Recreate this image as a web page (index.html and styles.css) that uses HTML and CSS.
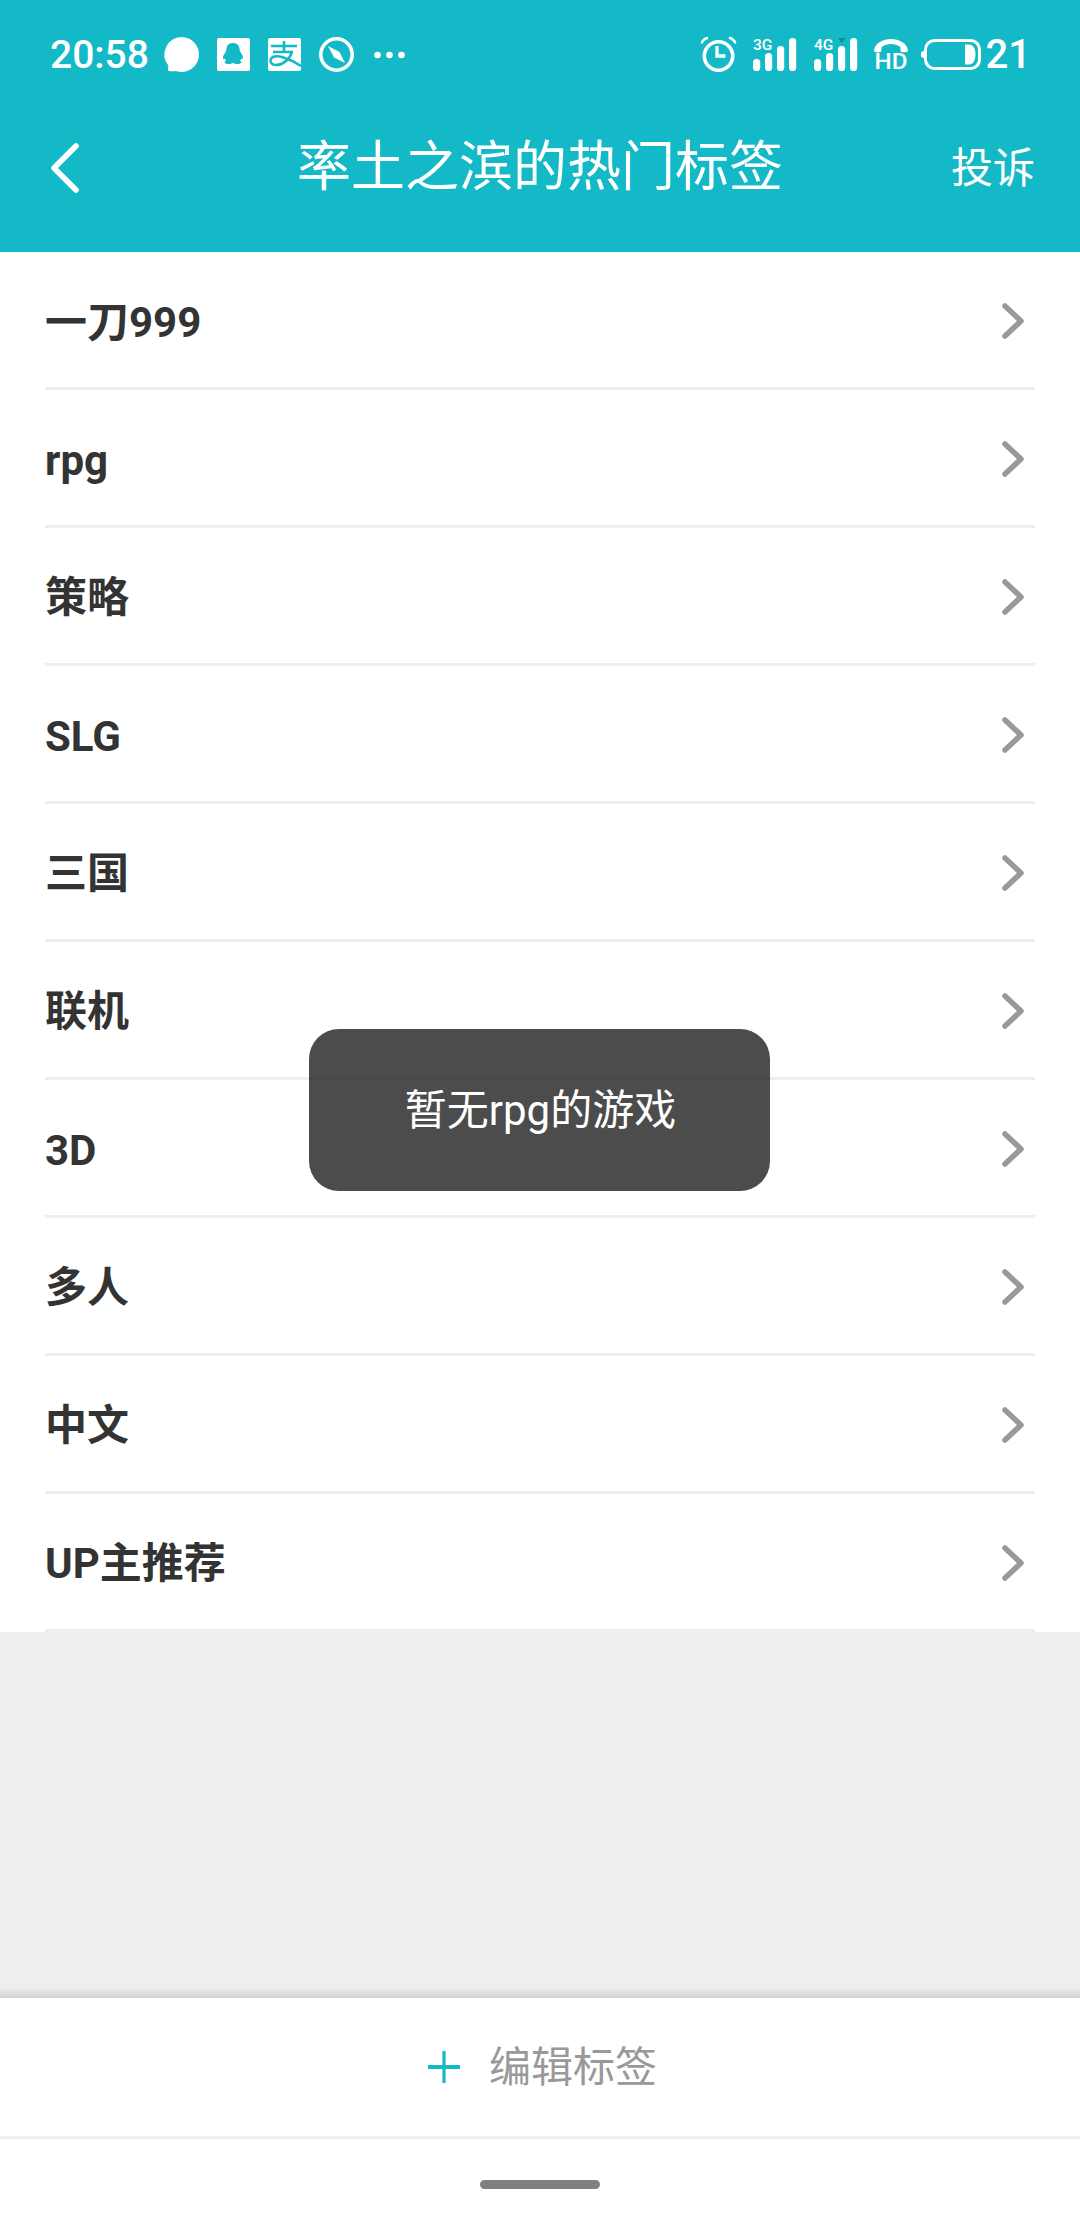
FILE: index.html
```html
<!DOCTYPE html>
<html lang="zh">
<head>
<meta charset="utf-8">
<title>率土之滨的热门标签</title>
<link rel="stylesheet" href="styles.css">
</head>
<body>
<div class="app">
  <header class="top">
    <div class="status">
      <div class="status-side">
        <span class="clock clock-time">20:58</span>
        <svg class="ic ic-bubble" viewBox="0 0 35 35"><path fill="#fff" d="M17.500 0a17.500 17.500 0 1 1-5.500 34.100c-2 .4-5.500.3-8-.4l.3-5.200A17.500 17.500 0 0 1 17.500 0z"/></svg>
        <svg class="ic ic-sq" viewBox="0 0 33 33"><rect width="33" height="33" rx="2" fill="#fff"/><path fill="#14b9c8" d="M16.500 5c4 0 6 3 6.200 7 0 1 .3 1.600.8 2.300 1.200 1.700 2.500 3.500 2.500 5.500 0 1.400-.7 1.500-1.700.7-.3 1-.7 1.500-1.400 2.200 1 .4 1.500.9 1.500 1.500 0 1-1.800 1.800-4.200 1.800-1.800 0-3-.4-4.200-1.200-1.200.8-2.400 1.200-4.200 1.200-2.400 0-4.200-.8-4.200-1.800 0-.6.5-1.100 1.500-1.500-.7-.7-1.100-1.200-1.400-2.200-1 .8-1.700.7-1.700-.7 0-2 1.300-3.800 2.500-5.500.5-.7.8-1.300.8-2.300.2-4 2.200-7 6.200-7z"/></svg>
        <svg class="ic ic-sq" viewBox="0 0 33 33"><rect width="33" height="33" rx="2" fill="#fff"/><g fill="none" stroke="#14b9c8" stroke-width="2.600"><path d="M3 8h26M16 3v11M5 14h20"/><path d="M24 14C22 21 15 27 8 27 4 27 2 24.500 2.500 22 3.500 18 9 17.500 14 19c6 1.800 13 5 19 9"/></g></svg>
        <svg class="ic ic-compass" viewBox="0 0 35 35"><circle cx="17.500" cy="17.500" r="15.700" fill="none" stroke="#fff" stroke-width="3.600"/><path fill="#fff" d="M9 9l11.500 6L26 26l-11-5.500z"/></svg>
        <svg class="ic ic-dots" viewBox="0 0 31 8"><circle cx="3.500" cy="4" r="3.300" fill="#fff"/><circle cx="15.500" cy="4" r="3.300" fill="#fff"/><circle cx="27.500" cy="4" r="3.300" fill="#fff"/></svg>
      </div>
      <div class="status-side">
        <svg class="ic ic-alarm" viewBox="0 0 35 35"><circle cx="17.500" cy="19" r="14.200" fill="none" stroke="#fff" stroke-width="3.600"/><path d="M16 9v10h8.500" fill="none" stroke="#fff" stroke-width="3.300"/><path d="M.6 6.500C1.500 3.500 3.500 1.500 7 .8M34.400 6.500C33.500 3.500 31.500 1.500 28 .8" fill="none" stroke="#fff" stroke-width="2.400"/></svg>
        <svg class="ic ic-signal" viewBox="0 -7 43 41"><g fill="#fff"><rect x="0" y="21" width="7.200" height="12" rx="3.600"/><rect x="12" y="15" width="7.200" height="18" rx="3.600"/><rect x="24" y="8" width="7.200" height="25" rx="3.600"/><rect x="36" y="0" width="7.200" height="33" rx="3.600"/></g><text x="0" y="12" class="net">3G</text></svg>
        <svg class="ic ic-signal ic-next" viewBox="0 -7 43 41"><g fill="#fff"><rect x="0" y="21" width="7.200" height="12" rx="3.600"/><rect x="12" y="15" width="7.200" height="18" rx="3.600"/><rect x="24" y="8" width="7.200" height="25" rx="3.600"/><rect x="36" y="0" width="7.200" height="33" rx="3.600"/></g><path fill="#0f8a96" d="M24 0h7.500l-3.750 5z"/><text x="0" y="12" class="net">4G</text></svg>
        <svg class="ic ic-hd" viewBox="0 0 34 38"><path fill="#fff" transform="translate(0 1) scale(1 1.1)" d="M0 11C1 5 9 1 17 1s16 4 17 10c0 1.500-1 2-2.500 2h-3c-1.300 0-2-.7-2-2V8.500C24 6.500 20 5.500 17 5.500S10 6.500 7.500 8.500V11c0 1.300-.7 2-2 2h-3C1 13 0 12.500 0 11z"/><text x="0.500" y="32" class="hd" textLength="33" lengthAdjust="spacingAndGlyphs">HD</text></svg>
        <svg class="ic ic-batt" viewBox="0 0 60 31"><path fill="#fff" d="M0 13.500l3-2v8l-3-2z"/><rect x="4.500" y="1.500" width="54" height="28" rx="9" fill="none" stroke="#fff" stroke-width="3"/><path fill="#fff" d="M44 5.500h4c4 0 6.500 4 6.500 10s-2.500 10-6.500 10h-4z"/></svg>
        <span class="clock">21</span>
      </div>
    </div>
    <div class="nav">
      <svg class="back" viewBox="0 0 28 50"><path d="M25 3L3 25l22 22" fill="none" stroke="#fff" stroke-width="5.600" stroke-linecap="round" stroke-linejoin="round"/></svg>
      <h1 class="title">率土之滨的热门标签</h1>
      <span class="report">投诉</span>
    </div>
  </header>

  <ul class="tags">
    <li class="tag"><span class="mixed">一刀999</span><svg class="chev" viewBox="0 0 22 36"><path d="M3 3l16 15L3 33" /></svg></li>
    <li class="tag"><span class="latin">rpg</span><svg class="chev" viewBox="0 0 22 36"><path d="M3 3l16 15L3 33" /></svg></li>
    <li class="tag"><span class="cjk">策略</span><svg class="chev" viewBox="0 0 22 36"><path d="M3 3l16 15L3 33" /></svg></li>
    <li class="tag"><span class="latin">SLG</span><svg class="chev" viewBox="0 0 22 36"><path d="M3 3l16 15L3 33" /></svg></li>
    <li class="tag"><span class="cjk">三国</span><svg class="chev" viewBox="0 0 22 36"><path d="M3 3l16 15L3 33" /></svg></li>
    <li class="tag"><span class="cjk">联机</span><svg class="chev" viewBox="0 0 22 36"><path d="M3 3l16 15L3 33" /></svg></li>
    <li class="tag"><span class="latin">3D</span><svg class="chev" viewBox="0 0 22 36"><path d="M3 3l16 15L3 33" /></svg></li>
    <li class="tag"><span class="cjk">多人</span><svg class="chev" viewBox="0 0 22 36"><path d="M3 3l16 15L3 33" /></svg></li>
    <li class="tag"><span class="cjk">中文</span><svg class="chev" viewBox="0 0 22 36"><path d="M3 3l16 15L3 33" /></svg></li>
    <li class="tag"><span class="cjk">UP主推荐</span><svg class="chev" viewBox="0 0 22 36"><path d="M3 3l16 15L3 33" /></svg></li>
  </ul>

  <div class="spacer"></div>

  <div class="edit">
    <svg class="plus" viewBox="0 0 32 32"><path d="M16 0v32" fill="none" stroke="#14b9c8" stroke-width="3.200"/><path d="M0 16h32" fill="none" stroke="#14b9c8" stroke-width="4"/></svg>
    <span>编辑标签</span>
  </div>
  <div class="gesture"><div class="handle"></div></div>

  <div class="toast">暂无rpg的游戏</div>
</div>
</body>
</html>
```
FILE: styles.css
```css
* { box-sizing: border-box; margin: 0; padding: 0; }
html, body { width: 1080px; height: 2232px; background: #fff; overflow: hidden; }
body { font-family: Roboto, "Noto Sans CJK SC", sans-serif; }
.app { position: relative; display: flex; flex-direction: column; width: 1080px; height: 2232px; background: #eee; }

.top { height: 252px; background: #14b9c8; color: #fff; }
.status { display: flex; align-items: center; justify-content: space-between; height: 109px; padding: 0 49px 0 50px; }
.status-side { display: flex; align-items: center; }
.clock { font-size: 40px; line-height: 46px; font-weight: 500; }
.clock-time { font-size: 39px; }
.ic { display: block; flex: none; overflow: visible; }
.ic-bubble { width: 35px; height: 35px; margin-left: 15px; }
.ic-sq { width: 33px; height: 33px; margin-left: 18px; }
.ic-compass { width: 35px; height: 35px; margin-left: 18px; }
.ic-dots { width: 31px; height: 8px; margin-left: 20px; }
.ic-alarm { width: 35px; height: 35px; }
.ic-signal { width: 43px; height: 41px; margin-top: -6px; margin-left: 17px; }
.ic-next { margin-left: 18px; }
.ic-hd { width: 34px; height: 38px; margin-left: 17px; margin-bottom: -3px; }
.ic-batt { width: 60px; height: 31px; margin-left: 13px; margin-right: 5px; }
.net { font: 500 15.500px Roboto, sans-serif; fill: #fff; }
.hd { font: 500 22px Roboto, sans-serif; fill: #fff; }

.nav { position: relative; display: flex; align-items: center; justify-content: space-between; height: 118px; padding: 0 45px 0 51px; }
.back { width: 28px; height: 50px; }
.title { position: absolute; left: 0; right: 0; text-align: center; font-size: 54px; line-height: 64px; font-weight: 400; }
.report { font-size: 42px; line-height: 50px; margin-top: 2px; }

.tags { list-style: none; background: #fff; }
.tag { position: relative; display: flex; align-items: center; justify-content: space-between; height: 138px; padding: 0 56px 0 45px; color: #333; font-size: 42px; font-weight: 700; }
.tag::after { content: ""; position: absolute; left: 45px; right: 45px; bottom: 0; height: 3px; background: #eee; }
.cjk { padding-bottom: 8px; }
.mixed { padding-bottom: 6px; }
.latin { padding-top: 2px; }
.chev { width: 22px; height: 36px; fill: none; stroke: #999; stroke-width: 5.500; stroke-linecap: round; stroke-linejoin: round; }

.spacer { flex: 1; background: linear-gradient(to bottom, #eee calc(100% - 11px), #d4d4d4); }
.edit { display: flex; align-items: center; justify-content: center; gap: 29px; height: 138px; padding: 0 0 8px 5px; background: #fff; color: #999; font-size: 42px; }
.plus { width: 32px; height: 32px; margin-top: 8px; }
.gesture { height: 96px; background: #fff; border-top: 3px solid #eee; padding-top: 41px; }
.handle { width: 120px; height: 9px; margin: 0 auto; border-radius: 4.500px; background: #808080; }

.toast { position: absolute; left: 309px; top: 1029px; display: flex; align-items: center; justify-content: center; width: 461px; height: 162px; border-radius: 30px; padding: 0 0 8px 2px; background: rgba(0, 0, 0, .7); color: #fff; font-size: 42px; }
```
